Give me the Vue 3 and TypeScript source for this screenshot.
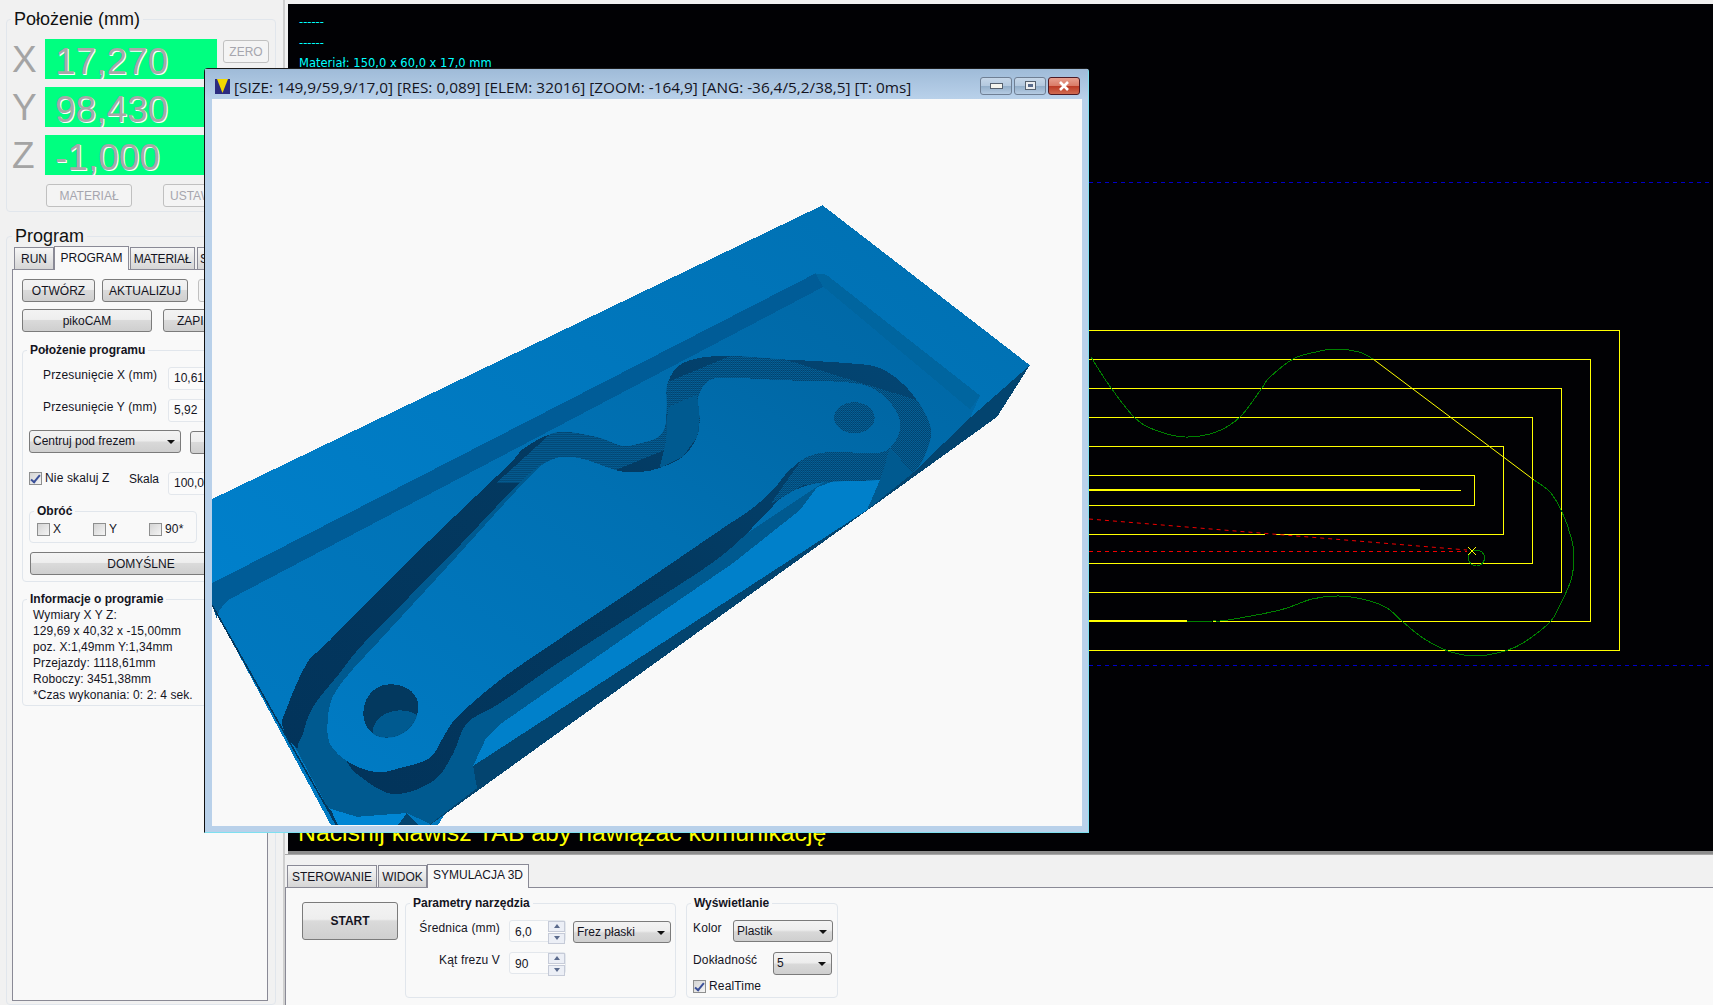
<template>
  <div class="app">
    <!-- lewa kolumna -->
    <div class="left">
      <fieldset class="group big pos">
        <legend>Położenie (mm)</legend>
        <div v-for="a in axes" :key="a.name" class="axis">
          <span class="axis-name">{{ a.name }}</span>
          <div class="axis-val">{{ a.value }}</div>
          <button v-if="a.name === 'X'" class="btn off zero">ZERO</button>
        </div>
        <div class="row pos-btns">
          <button class="btn off">MATERIAŁ</button>
          <button class="btn off ustaw">USTAW</button>
        </div>
      </fieldset>

      <fieldset class="group big program">
        <legend>Program</legend>
        <div class="tabs">
          <div class="tab first">RUN</div>
          <div class="tab active">PROGRAM</div>
          <div class="tab">MATERIAŁ</div>
          <div class="tab">SYMULACJA</div>
        </div>
        <div class="pane left-pane">
          <div class="row b1">
            <button class="btn w73">OTWÓRZ</button>
            <button class="btn w86">AKTUALIZUJ</button>
            <button class="btn off w60"></button>
          </div>
          <div class="row b2">
            <button class="btn w130">pikoCAM</button>
            <button class="btn w70">ZAPISZ</button>
          </div>

          <fieldset class="group small prog-pos">
            <legend>Położenie programu</legend>
            <div class="row f1">
              <label class="lbl">Przesunięcie X (mm)</label>
              <div class="input">10,61</div>
            </div>
            <div class="row f2">
              <label class="lbl">Przesunięcie Y (mm)</label>
              <div class="input">5,92</div>
            </div>
            <div class="row f3">
              <div class="select w152">Centruj pod frezem</div>
              <button class="btn w60 nudge"></button>
            </div>
            <div class="row f4">
              <span class="check on"></span>
              <span class="check-text">Nie skaluj Z</span>
              <span class="skala">Skala</span>
              <div class="input">100,0</div>
            </div>
            <fieldset class="group small rotate">
              <legend>Obróć</legend>
              <div class="row rot-row">
                <span v-for="r in rotations" :key="r" class="rot">
                  <span class="check"></span><span class="check-text">{{ r }}</span>
                </span>
              </div>
            </fieldset>
            <button class="btn defaults">DOMYŚLNE</button>
          </fieldset>

          <fieldset class="group small info">
            <legend>Informacje o programie</legend>
            <div v-for="l in infoLines" :key="l" class="info-line">{{ l }}</div>
          </fieldset>
        </div>
      </fieldset>
    </div>

    <!-- prawa kolumna -->
    <div class="right">
      <div class="view">
        <div class="black">
          <div class="log">
            <div>------</div>
            <div>------</div>
            <div>Materiał: 150,0 x 60,0 x 17,0 mm</div>
          </div>
          <svg class="paths" viewBox="288 4 1425 847" width="1425" height="847">
            <path v-for="b in blueLines" :key="b" :d="`M1089 ${b}.5H1713`" class="blue" />
            <path :d="yellow" class="yellow" />
            <path :d="yellowThick" class="yellow thick" />
            <path d="M1373 359L1534 480" class="yellow diag" />
            <path :d="green1" class="green" />
            <path :d="green2" class="green" />
            <circle cx="1476.5" cy="558" r="8" class="green" />
            <path d="M1089 519L1467 550M1089 551.5H1467" class="red" />
            <path d="M1468 547L1476 555M1476 547L1468 555" class="yellow diag" />
          </svg>
          <div class="prompt">Naciśnij klawisz TAB aby nawiązać komunikację</div>
        </div>
      </div>

      <div class="tabs bottom-tabs">
        <div class="tab t90">STEROWANIE</div>
        <div class="tab t49">WIDOK</div>
        <div class="tab active t102">SYMULACJA 3D</div>
      </div>
      <div class="pane bottom-pane">
        <button class="btn start">START</button>

        <fieldset class="group small tool">
          <legend>Parametry narzędzia</legend>
          <div class="row t1">
            <label class="lbl right-lbl">Średnica (mm)</label>
            <div class="spin">
              <span>6,0</span>
              <i class="arrows"><b class="up"></b><b class="down"></b></i>
            </div>
            <div class="select w98">Frez płaski</div>
          </div>
          <div class="row t2">
            <label class="lbl right-lbl">Kąt frezu V</label>
            <div class="spin">
              <span>90</span>
              <i class="arrows"><b class="up"></b><b class="down"></b></i>
            </div>
          </div>
        </fieldset>

        <fieldset class="group small display">
          <legend>Wyświetlanie</legend>
          <div class="row d1">
            <label class="lbl d-lbl kolor">Kolor</label>
            <div class="select w100">Plastik</div>
          </div>
          <div class="row d2">
            <label class="lbl d-lbl dokl">Dokładność</label>
            <div class="select w59">5</div>
          </div>
          <div class="row d3">
            <span class="check on"></span>
            <span class="check-text">RealTime</span>
          </div>
        </fieldset>
      </div>
    </div>

    <!-- okno symulacji -->
    <div class="window">
      <div class="titlebar">
        <svg class="win-icon" viewBox="0 0 15 15" width="15" height="15">
          <rect width="15" height="15" fill="#2c2c80" />
          <path d="M2 0H13L7.5 14Z" fill="#f2d800" />
        </svg>
        <span class="win-title">[SIZE: 149,9/59,9/17,0] [RES: 0,089] [ELEM: 32016] [ZOOM: -164,9] [ANG: -36,4/5,2/38,5] [T: 0ms]</span>
        <div class="win-btns">
          <div class="wb"><span class="g-min"></span></div>
          <div class="wb"><span class="g-max"></span></div>
          <div class="wb close">
            <svg viewBox="0 0 14 10" width="14" height="10">
              <path d="M3 1L11 9M11 1L3 9" stroke="#fff" stroke-width="2.6" fill="none" />
            </svg>
          </div>
        </div>
      </div>
      <div class="client">
        <svg viewBox="212 99 870 726" width="870" height="726" shape-rendering="crispEdges">
          <defs>
            <linearGradient id="top" x1="0" y1="1" x2="1" y2="0">
              <stop offset="0" stop-color="#0084d2" />
              <stop offset="1" stop-color="#006fb0" />
            </linearGradient>
            <linearGradient id="floor" x1="0" y1="1" x2="1" y2="0">
              <stop offset="0" stop-color="#007bc4" />
              <stop offset="0.6" stop-color="#0070b2" />
              <stop offset="1" stop-color="#0066a3" />
            </linearGradient>
            <linearGradient id="wall" x1="0" y1="1" x2="1" y2="0">
              <stop offset="0" stop-color="#02335a" />
              <stop offset="0.55" stop-color="#033960" />
              <stop offset="1" stop-color="#034674" />
            </linearGradient>
            <pattern id="dither" patternUnits="userSpaceOnUse" width="3.65" height="4.75">
              <rect width="3.65" height="4.75" fill="#04659f" />
              <rect width="1.83" height="2.38" fill="#033f68" />
              <rect x="1.83" y="2.38" width="1.83" height="2.38" fill="#033f68" />
            </pattern>
            <clipPath id="bighole"><path :d="bigHole" /></clipPath>
            <clipPath id="trenchclip"><path :d="trench" /></clipPath>
          </defs>
          <g transform="translate(200 180) scale(.5485 .4209)">
            <path d="M22 758L1135 60L1513 440L1453 563L390 1560H250L22 1010Z" fill="url(#top)" />
            <path d="M22 958L1122 222L1140 228L1422 512L1404 565L1300 696L500 1400L420 1560H250L22 1010Z" fill="url(#floor)" />
            <path :d="recessWall" fill="#005c97" />
            <path d="M1122 222L1142 225L1422 512L1404 545L1135 252Z" fill="#00659f" />
            <path d="M1513 440L1453 563L390 1560L420 1530L505 1445L498 1392L1216 784L1300 696L1404 565Z" fill="#03446f" />
            <path d="M150 1290L233 1492L286 1513L377 1504L420 1530L505 1445L498 1392L1216 784L1300 696L1265 640L1135 720L500 1270Z" fill="#005a90" />
            <path :d="rim" fill="#0080ca" />
            <path d="M233 1492L286 1513L377 1504L346 1560H262Z" fill="#0086d4" />
            <path d="M346 1560L377 1504L420 1560Z" fill="#03446f" />
            <path d="M218 1465L252 1535L240 1500Z" fill="#03395f" />
            <path d="M22 1010L250 1535" stroke="#03395f" stroke-width="3" fill="none" />
            <path :d="trench" fill="url(#wall)" />
            <g clip-path="url(#trenchclip)">
              <path d="M540 720L650 590L1000 400L1350 540L1350 720L1240 700L1000 560L700 720Z" fill="url(#dither)" />
              <path d="M1040 770L1110 640L1270 620L1270 725L1100 725Z" fill="url(#dither)" />
            </g>
            <path :d="trenchFloor" fill="#005a90" />
            <path d="M853 540L906 510L911 563L906 611L880 658L838 684L850 620Z" fill="#005a90" />
            <path d="M1216 784L1240 713L1258 637L1300 696Z" fill="#005a90" />
            <path :d="part" fill="url(#floor)" />
            <path :d="bigHole" fill="#03395f" />
            <ellipse cx="365" cy="1312" rx="50" ry="52" clip-path="url(#bighole)" fill="#005a90" />
            <ellipse cx="1193" cy="565" rx="37" ry="37" fill="url(#dither)" />
          </g>
        </svg>
      </div>
    </div>
  </div>
</template>

<script setup lang="ts">
type Pt = [number, number];

const axes = [
  { name: "X", value: "17,270" },
  { name: "Y", value: "98,430" },
  { name: "Z", value: "-1,000" },
];
const rotations = ["X", "Y", "90*"];
const infoLines = [
  "Wymiary X Y Z:",
  "129,69 x 40,32 x -15,00mm",
  "poz. X:1,49mm Y:1,34mm",
  "Przejazdy: 1118,61mm",
  "Roboczy: 3451,38mm",
  "*Czas wykonania: 0: 2: 4 sek.",
];
const blueLines = [182, 665];

// catmull-rom -> bezier, zeby kontury nie byly kanciaste
function smooth(pts: Pt[], closed = false): string {
  const at = (i: number): Pt =>
    closed
      ? pts[(i + pts.length) % pts.length]
      : pts[Math.min(pts.length - 1, Math.max(0, i))];
  const last = closed ? pts.length : pts.length - 1;
  let d = `M${pts[0][0]} ${pts[0][1]}`;
  for (let i = 0; i < last; i++) {
    const [p0, p1, p2, p3] = [at(i - 1), at(i), at(i + 1), at(i + 2)];
    const c1x = p1[0] + (p2[0] - p0[0]) / 6;
    const c1y = p1[1] + (p2[1] - p0[1]) / 6;
    const c2x = p2[0] - (p3[0] - p1[0]) / 6;
    const c2y = p2[1] - (p3[1] - p1[1]) / 6;
    d += `C${c1x} ${c1y} ${c2x} ${c2y} ${p2[0]} ${p2[1]}`;
  }
  return closed ? d + "Z" : d;
}

// spirala sciezki narzedzia
const yellow = [
  "M1089 330.5H1619.5V650.5H1089",
  "M1089 359.5H1590.5V621.5H1213",
  "M1089 388.5H1561.5V592.5H1089",
  "M1089 417.5H1532.5V563.5H1089",
  "M1089 446.5H1503.5V534.5H1276M1265 534.5H1089",
  "M1089 475.5H1474.5V505.5H1089",
  "M1089 490.5H1461",
].join("");
const yellowThick = "M1089 490H1420M1089 621H1187";
const green1 = smooth([
  [1091, 357], [1109, 385], [1134, 417], [1155, 430], [1185, 437], [1216, 432],
  [1240, 417], [1262, 388], [1269, 378], [1293, 359], [1316, 352], [1335, 349],
  [1359, 352], [1373, 359],
]);
const green2 = smooth([
  [1534, 480], [1550, 492], [1562, 512], [1571, 537], [1574, 557], [1571, 580],
  [1560, 605], [1550, 622], [1523, 643], [1505, 651], [1476, 656], [1448, 651],
  [1423, 638], [1403, 622], [1387, 608], [1366, 600], [1339, 596], [1312, 599],
  [1280, 610], [1228, 620], [1213, 621], [1187, 621],
]);

const recessWall =
  "M22 958L1122 222L1142 250L70 985C50 995 35 1015 30 1040L22 1010Z";
const rim =
  "M498 1392L520 1330L545 1295L802 1062L972 910L1094 784L1125 730L1161 713L1240 712L1216 784Z";
const trench = smooth([
  [151, 1300], [159, 1252], [195, 1148], [237, 1093], [400, 880], [560, 680], [590, 638],
  [650, 600], [720, 610], [770, 632], [802, 626], [833, 613], [848, 587], [851, 539],
  [853, 482], [880, 435], [948, 418], [1060, 426], [1179, 435], [1240, 447], [1289, 494],
  [1325, 563], [1331, 618], [1300, 696], [1240, 712], [1125, 720], [1063, 753], [1026, 801],
  [948, 896], [802, 1022], [650, 1150], [547, 1243], [487, 1290], [461, 1364], [425, 1428],
  [352, 1459], [286, 1411], [252, 1364], [182, 1354],
], true);
const trenchFloor = smooth([
  [182, 1354], [188, 1314], [206, 1252], [255, 1171], [304, 1093], [450, 900], [590, 710],
  [640, 665], [590, 720], [450, 920], [328, 1093], [273, 1171], [242, 1228], [233, 1283],
  [237, 1340], [252, 1364],
], true);
const part = smooth([
  [233, 1283], [242, 1228], [273, 1171], [328, 1093], [450, 920], [590, 720], [640, 665],
  [690, 660], [760, 690], [802, 694], [838, 684], [880, 658], [906, 611], [911, 563],
  [908, 516], [924, 482], [953, 470], [1070, 476], [1190, 482], [1240, 506], [1271, 554],
  [1276, 594], [1258, 637], [1227, 649], [1154, 646], [1107, 658], [1070, 696], [1045, 736],
  [1003, 784], [948, 832], [802, 962], [650, 1095], [547, 1188], [469, 1276], [443, 1325],
  [419, 1373], [365, 1397], [323, 1407], [273, 1385], [237, 1340],
], true);
const bigHole =
  "M347 1198C380 1198 400 1225 398 1255C396 1295 370 1325 340 1325C312 1325 296 1295 298 1262C300 1225 320 1198 347 1198Z";
</script>

<style>
html,
body {
  margin: 0;
  background: #f1f1f1;
}
</style>

<style scoped>
.app {
  position: relative;
  display: flex;
  width: 1713px;
  height: 1005px;
  overflow: hidden;
  background: #f1f1f1;
  font-family: "Liberation Sans", Arial, sans-serif;
  font-size: 12px;
  color: #14141e;
}
.row {
  display: flex;
}
fieldset {
  margin: 0;
  padding: 0;
  min-width: 0;
  box-sizing: border-box;
  border: 1px solid #e1e6ec;
  border-radius: 4px;
}
legend {
  padding: 0 3px;
  margin-left: 4px;
}
.group.big > legend {
  font-size: 18px;
  line-height: 20px;
  margin-left: 0;
  color: #111;
}
.group.small > legend {
  font-size: 12px;
  line-height: 14px;
  font-weight: bold;
}

/* przyciski */
.btn {
  display: block;
  flex: none;
  height: 23px;
  padding: 0;
  box-sizing: border-box;
  border: 1px solid #7b7b7b;
  border-radius: 3px;
  background: linear-gradient(#f3f3f3 0, #eee 45%, #dadada 50%, #cfcfcf 100%);
  font-family: inherit;
  font-size: 12px;
  color: #14141e;
}
.btn.off {
  border-color: #c0c0c0;
  background: #f4f4f4;
  color: #a6a6ae;
}
.w60 {
  width: 60px;
}
.w70 {
  width: 70px;
}
.w73 {
  width: 73px;
}
.w86 {
  width: 86px;
}
.w130 {
  width: 130px;
}

/* lewa kolumna */
.left {
  display: flex;
  flex-direction: column;
  width: 284px;
  flex: none;
  box-sizing: border-box;
  padding: 9px 0 0 6px;
  border-right: 1px solid #cfcfcf;
}
.pos {
  width: 270px;
  height: 204px;
  padding: 10px 0 0 4px;
}
.axis {
  display: flex;
  height: 40px;
  margin-bottom: 8px;
}
.axis-name {
  width: 33px;
  margin-left: 1px;
  font-size: 37px;
  line-height: 42px;
  color: #a4a4a4;
}
.axis-val {
  width: 172px;
  height: 40px;
  box-sizing: border-box;
  padding-left: 10px;
  background: #00ff80;
  font-size: 37px;
  line-height: 46px;
  color: #a8a8a8;
  text-shadow: 1px 1px 0 #fff;
}
.zero {
  width: 46px;
  margin: 1px 0 0 6px;
}
.pos-btns {
  gap: 31px;
  margin: 9px 0 0 35px;
}
.pos-btns .btn {
  width: 86px;
}
.pos-btns .ustaw {
  width: 56px;
}
.program {
  width: 270px;
  height: 782px;
  margin-top: 14px;
  padding: 0 7px 3px 5px;
  display: flex;
  flex-direction: column;
}
.tabs {
  display: flex;
  align-items: flex-end;
  height: 23px;
  flex: none;
  padding-left: 2px;
}
.tab {
  flex: none;
  box-sizing: border-box;
  height: 22px;
  padding: 0 2px;
  margin-right: 1px;
  border: 1px solid #8a8a96;
  border-bottom: none;
  background: linear-gradient(#f6f6f6, #d6d6d6);
  line-height: 22px;
  text-align: center;
  white-space: nowrap;
  font-size: 12px;
}
.tab.first {
  width: 40px;
  margin-right: 0;
}
.tab.active {
  position: relative;
  top: 1px;
  height: 24px;
  margin-right: 1px;
  background: #f9f9f9;
  line-height: 23px;
  z-index: 1;
}
.left .tab.active {
  width: 75px;
}
.left .tab:nth-child(3) {
  width: 65px;
  margin-right: 2px;
  letter-spacing: -0.2px;
}
.pane {
  box-sizing: border-box;
  border: 1px solid #8a8a96;
  background: #f9f9f9;
}
.left-pane {
  flex: 1;
  padding: 9px 0 0 9px;
}
.b1 {
  gap: 7px;
}
.b1 .w60 {
  margin-left: 3px;
}
.b2 {
  gap: 11px;
  margin-top: 7px;
}
.prog-pos {
  width: 240px;
  height: 239px;
  margin-top: 11px;
}
.lbl {
  display: block;
  line-height: 14px;
  letter-spacing: 0.15px;
  white-space: nowrap;
}
.input {
  flex: none;
  box-sizing: border-box;
  width: 90px;
  height: 23px;
  border: 1px solid #e3e7ec;
  border-radius: 3px;
  background: #fbfbfb;
  padding-left: 5px;
  line-height: 21px;
}
.f1 {
  margin-top: 10px;
}
.f2 {
  margin-top: 9px;
}
.f1 .lbl,
.f2 .lbl {
  width: 125px;
  margin-left: 20px;
  padding-top: 1px;
}
.f3 {
  margin: 8px 0 0 6px;
}
.select {
  position: relative;
  flex: none;
  box-sizing: border-box;
  height: 22px;
  padding-left: 3px;
  border: 1px solid #7b7b7b;
  border-radius: 3px;
  background: linear-gradient(#f3f3f3, #ededed 45%, #d8d8d8 55%, #cfcfcf);
  line-height: 21px;
  white-space: nowrap;
}
.select::after {
  content: "";
  position: absolute;
  right: 5px;
  top: 9px;
  border: 4px solid transparent;
  border-top: 4px solid #111;
  border-bottom: none;
}
.f3 .select {
  height: 23px;
}
.w152 {
  width: 152px;
}
.w98 {
  width: 98px;
}
.w100 {
  width: 100px;
}
.w59 {
  width: 59px;
}
.nudge {
  margin: 1px 0 0 9px;
}
.f4 {
  align-items: flex-start;
  margin: 18px 0 0 6px;
}
.check {
  position: relative;
  display: inline-block;
  flex: none;
  box-sizing: border-box;
  width: 13px;
  height: 13px;
  border: 1px solid #8e8f8f;
  background: linear-gradient(135deg, #d4d4d4, #f4f4f4);
}
.check.on::after {
  content: "";
  position: absolute;
  left: 3px;
  top: 0;
  width: 3px;
  height: 8px;
  border: solid #3a4f98;
  border-width: 0 2px 2px 0;
  transform: rotate(40deg);
}
.check-text {
  margin-left: 3px;
  width: 68px;
  line-height: 13px;
  letter-spacing: 0.15px;
}
.rot .check-text {
  width: auto;
}
.skala {
  width: 39px;
  margin-left: 16px;
  line-height: 14px;
}
.rotate {
  width: 168px;
  height: 39px;
  margin: 9px 0 0 6px;
}
.rot-row {
  margin: 5px 0 0 7px;
}
.rot {
  display: flex;
  flex: none;
  width: 56px;
}
.defaults {
  width: 222px;
  margin: 9px 0 0 7px;
}
.info {
  width: 240px;
  height: 114px;
  margin-top: 10px;
}
.info-line {
  height: 16px;
  margin-left: 10px;
  line-height: 16px;
  letter-spacing: 0.08px;
  white-space: nowrap;
}
.info-line:first-of-type {
  margin-top: 1px;
}

/* prawa kolumna */
.right {
  display: flex;
  flex-direction: column;
  flex: 1;
  min-width: 0;
  border-left: 1px solid #cfcfcf;
}
.view {
  height: 855px;
  flex: none;
  padding: 4px 0 0 3px;
  box-sizing: border-box;
  border-bottom: 1px solid #a8a8a8;
}
.black {
  position: relative;
  height: 847px;
  border-bottom: 3px solid #8c8c8c;
  background: #010104;
  overflow: hidden;
}
.log {
  position: absolute;
  left: 11px;
  top: 8px;
  font-family: "DejaVu Sans", sans-serif;
  font-size: 11.5px;
  line-height: 20.5px;
  color: #00ffff;
}
.paths {
  position: absolute;
  left: 0;
  top: 0;
}
.paths path,
.paths circle {
  fill: none;
}
.blue {
  stroke: #0000c8;
  stroke-dasharray: 4 4;
}
.yellow {
  stroke: #ffff00;
  shape-rendering: crispEdges;
}
.yellow.thick {
  stroke-width: 2;
}
.yellow.diag {
  shape-rendering: auto;
}
.green {
  stroke: #008000;
  stroke-width: 1;
  shape-rendering: crispEdges;
}
.red {
  stroke: #f00000;
  stroke-dasharray: 4 4;
}
.prompt {
  position: absolute;
  left: 10px;
  bottom: 4px;
  font-size: 24.8px;
  line-height: 28px;
  color: #ffff00;
  white-space: nowrap;
}
.bottom-tabs {
  margin-top: 10px;
  padding-left: 2px;
  height: 22px;
}
.t90 {
  width: 90px;
}
.t49 {
  width: 49px;
  margin-right: 0;
}
.t102 {
  width: 102px;
}
.bottom-tabs .active {
  line-height: 21px;
}
.bottom-pane {
  flex: 1;
  display: flex;
  align-items: flex-start;
  padding: 8px 0 0 16px;
  border-right: none;
  border-bottom: none;
}
.start {
  width: 96px;
  height: 38px;
  margin-top: 6px;
  font-weight: bold;
}
.tool {
  width: 271px;
  height: 102px;
  margin-left: 7px;
}
.right-lbl {
  width: 94px;
  text-align: right;
  padding-top: 1px;
}
.t1 {
  margin-top: 10px;
  gap: 9px;
}
.t2 {
  margin-top: 9px;
  gap: 9px;
}
.t1 .select {
  margin: 1px 0 0 -2px;
}
.spin {
  position: relative;
  flex: none;
  box-sizing: border-box;
  width: 57px;
  height: 22px;
  padding-left: 5px;
  border: 1px solid #e3e7ec;
  border-radius: 3px;
  background: #fbfbfb;
  line-height: 22px;
}
.arrows {
  position: absolute;
  right: 0;
  top: 0;
  display: flex;
  flex-direction: column;
  gap: 1px;
  width: 17px;
}
.arrows b {
  position: relative;
  height: 9px;
  border: 1px solid #c6cbd8;
  background: #eceff6;
}
.arrows b::after {
  content: "";
  position: absolute;
  left: 5px;
  top: 2px;
  border: 3px solid transparent;
}
.arrows .up::after {
  border-top: none;
  border-bottom: 4px solid #5a6a8c;
}
.arrows .down::after {
  border-bottom: none;
  border-top: 4px solid #5a6a8c;
}
.display {
  width: 152px;
  height: 102px;
  margin-left: 10px;
}
.d-lbl {
  margin-left: 6px;
  padding-top: 1px;
}
.kolor {
  width: 40px;
}
.dokl {
  width: 80px;
}
.d1 {
  margin-top: 10px;
}
.d2 {
  margin-top: 10px;
}
.d2 .select {
  height: 23px;
}
.d3 {
  margin: 5px 0 0 6px;
}

/* okno symulacji */
.window {
  position: absolute;
  left: 204px;
  top: 68px;
  width: 885px;
  height: 765px;
  box-sizing: border-box;
  display: flex;
  flex-direction: column;
  padding: 0 6px 6px 7px;
  border: 1px solid #1a1a1a;
  border-right-color: #7ee0f0;
  border-bottom-color: #7ee0f0;
  border-left-color: #111;
  border-radius: 4px 4px 0 0;
  background: #b9d1ea;
}
.titlebar {
  display: flex;
  align-items: center;
  height: 30px;
  flex: none;
  margin: 0 -6px 0 -7px;
  padding: 0 8px 0 10px;
  background: linear-gradient(#9fbbd8, #b9d1ea);
}
.win-icon {
  margin-top: 5px;
}
.win-title {
  margin: 6px 0 0 4px;
  font-family: "Open Sans", sans-serif;
  font-size: 15.35px;
  color: #14141e;
  white-space: nowrap;
}
.win-btns {
  display: flex;
  gap: 2px;
  margin-left: auto;
  margin-top: 3px;
}
.wb {
  display: flex;
  align-items: center;
  justify-content: center;
  width: 32px;
  height: 18px;
  box-sizing: border-box;
  border: 1px solid #6f7f94;
  border-radius: 3px;
  background: linear-gradient(#c5d6e8 0, #b3c8de 50%, #93aec9 52%, #b5cbe2 100%);
}
.g-min {
  width: 11px;
  height: 4px;
  border: 1px solid #55606e;
  background: #f4f4ee;
}
.g-max {
  width: 9px;
  height: 7px;
  box-sizing: border-box;
  border: 2px solid #eceef0;
  outline: 1px solid #55606e;
  background: #5a6c8c;
}
.wb.close {
  border-color: #4d1a24;
  background: linear-gradient(#e8a090 0, #d97a66 50%, #bc3b26 52%, #d06a50 100%);
}
.client {
  flex: 1;
  background: #f9f9f9;
  overflow: hidden;
}
.client svg {
  display: block;
}
</style>
